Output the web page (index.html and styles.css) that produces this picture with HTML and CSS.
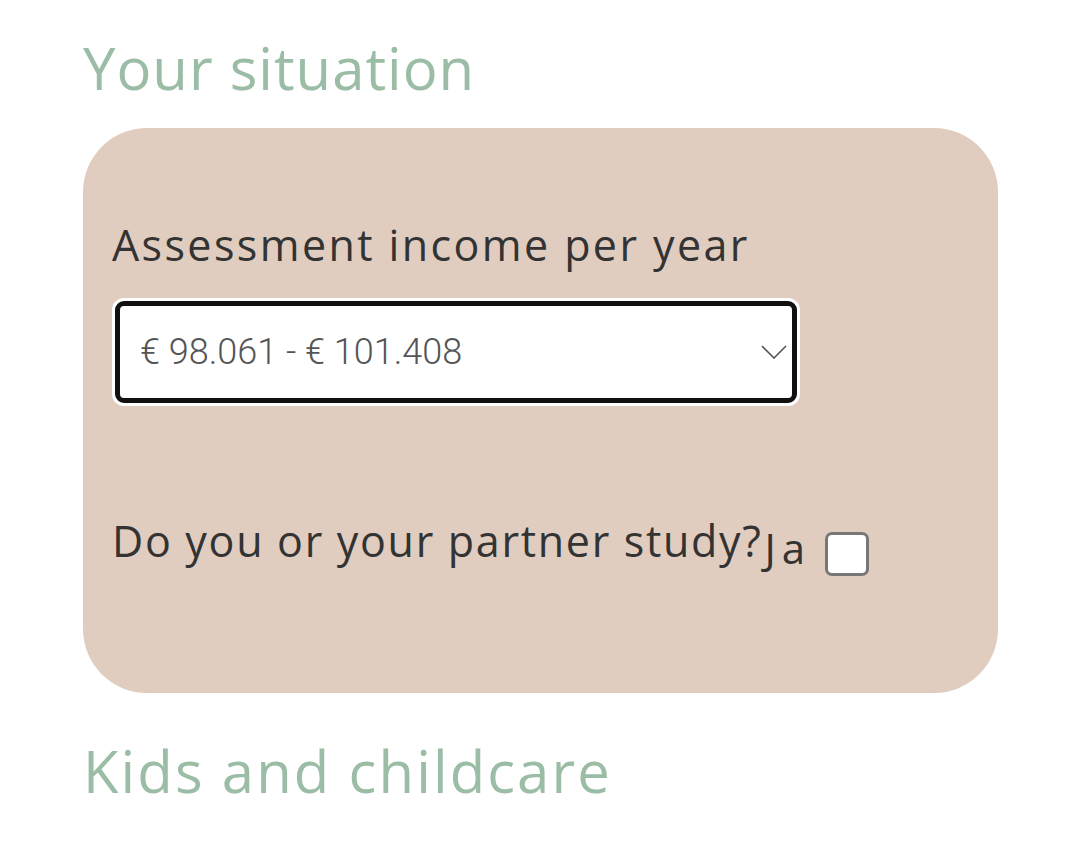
FILE: index.html
```html
<!DOCTYPE html>
<html>
<head>
<meta charset="utf-8">
<link rel="stylesheet" href="styles.css">
</head>
<body>
<div class="page">
  <h2 class="section-title first">Your situation</h2>
  <div class="card">
    <div class="field">
      <label class="field-label">Assessment income per year</label>
      <div class="select">
        <span class="select-value">€ 98.061 - € 101.408</span>
        <svg class="chevron" width="26" height="14" viewBox="0 0 26 14"><path d="M1 1 L13 13 L25 1" fill="none" stroke="#555" stroke-width="1.6"/></svg>
      </div>
    </div>
    <div class="study-row">
      <span class="study-label">Do you or your partner study?</span><span class="ja">Ja</span><span class="checkbox"></span>
    </div>
  </div>
  <h2 class="section-title second">Kids and childcare</h2>
</div>
</body>
</html>
```

FILE: styles.css
```css
html, body {
  margin: 0;
  padding: 0;
  background: #ffffff;
}
.page {
  padding: 28px 82px 0 83px;
  font-family: "Open Sans", sans-serif;
}
.section-title {
  margin: 0;
  font-size: 58px;
  font-weight: 400;
  line-height: 80px;
  color: #9bbca5;
}
.first {
  letter-spacing: 1px;
}
.card {
  margin-top: 20px;
  height: 565px;
  box-sizing: border-box;
  background: #e0cdbf;
  border-radius: 64px;
  padding: 87px 28px 0 29px;
}
.field-label {
  display: block;
  font-size: 43px;
  line-height: 60px;
  letter-spacing: 2.4px;
  color: #333;
}
.select {
  margin: 26px 0 0 3px;
  width: 682px;
  height: 102px;
  box-sizing: border-box;
  border: 5px solid #111;
  border-radius: 9px;
  box-shadow: 0 0 0 3px #fff;
  background: #fff;
  display: flex;
  align-items: center;
  justify-content: space-between;
  padding: 0 5px 0 20px;
}
.select-value {
  font-family: Roboto, sans-serif;
  font-size: 36px;
  font-weight: 300;
  color: #555;
}
.chevron {
  display: block;
}
.study-row {
  margin-top: 101px;
  display: flex;
  align-items: center;
}
.study-label {
  font-size: 43px;
  letter-spacing: 1.7px;
  color: #333;
}
.ja {
  font-size: 42px;
  letter-spacing: 6px;
  color: #333;
  margin-left: 2px;
  margin-top: 14px;
}
.checkbox {
  margin-left: 14px;
  margin-top: 28px;
  width: 44px;
  height: 44px;
  box-sizing: border-box;
  border: 3px solid #777;
  border-radius: 7px;
  background: #fff;
}
.second {
  margin-top: 38px;
  letter-spacing: 2.1px;
}
```
